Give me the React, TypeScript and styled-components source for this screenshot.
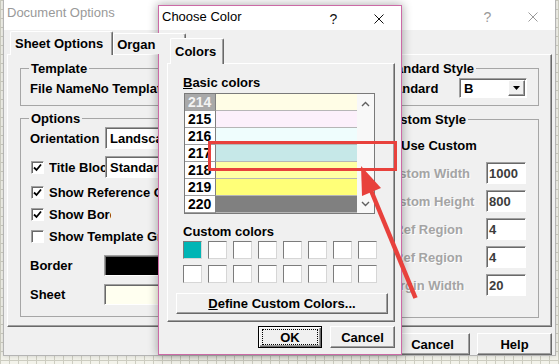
import React from 'react';
import styled, { createGlobalStyle, css } from 'styled-components';

type BasicColor = { num: number; color: string; selected?: boolean };

const BASIC_COLORS: BasicColor[] = [
  { num: 214, color: '#fffde6', selected: true },
  { num: 215, color: '#fcf0fb' },
  { num: 216, color: '#effdfd' },
  { num: 217, color: '#c6e8e8' },
  { num: 218, color: '#ffffa4' },
  { num: 219, color: '#ffff78' },
  { num: 220, color: '#808080' },
];

const CUSTOM_COLORS = ['#00b5b5', ...Array(15).fill('#ffffff')];

const CheckMark = () => (
  <svg width="9" height="9" viewBox="0 0 9 9">
    <path d="M1 4.5 L3.5 7 L8 1.5" fill="none" stroke="#000" strokeWidth="1.8" />
  </svg>
);

const CloseIcon = ({ color }: { color: string }) => (
  <svg width="10" height="10" viewBox="0 0 10 10">
    <path d="M0.5 0.5 L9.5 9.5 M9.5 0.5 L0.5 9.5" stroke={color} strokeWidth="1" />
  </svg>
);

const Chevron = ({ down }: { down?: boolean }) => (
  <svg width="9" height="6" viewBox="0 0 9 6">
    <path
      d={down ? 'M1 1 L4.5 4.5 L8 1' : 'M1 5 L4.5 1.5 L8 5'}
      fill="none"
      stroke="#606060"
      strokeWidth="1.4"
    />
  </svg>
);

const DropArrow = () => (
  <svg width="7" height="4" viewBox="0 0 7 4">
    <path d="M0 0 H7 L3.5 4 Z" fill="#000" />
  </svg>
);

const App = () => {
  return (
    <>
      <GlobalStyle />
      <Desktop>
        {/* back window: Document Options */}
        <Window $x={3} $y={-1} $w={553} $h={357} $frame="#b4b4b4">
          <TitleBar $h={30} $pt={3}>
            <TitleText $inactive>Document Options</TitleText>
            <TitleButtons>
              <TitleButton $inactive>?</TitleButton>
              <TitleButton $inactive>
                <CloseIcon color="#9a9a9a" />
              </TitleButton>
            </TitleButtons>
          </TitleBar>
          <DialogBody $pad="1px 3px 0 3px">
            <TabStrip $h={23}>
              <Tab $active $pad="0 9px 0 4px">Sheet Options</Tab>
              <Tab $pad="0 30px 0 3px">Organ</Tab>
            </TabStrip>
            <TabPanel $h={273} $pad="6px 12px 0 12px">
              <SheetColumn $w={330}>
                <Group>
                  <GroupTitle>Template</GroupTitle>
                  <GroupBody $pad="4px 0 9px 9px">
                    <FieldRow $h={16}>
                      <FieldLabel>File Name</FieldLabel>
                      <FieldLabel>No Template</FieldLabel>
                    </FieldRow>
                  </GroupBody>
                </Group>
                <Group $mt={5}>
                  <GroupTitle>Options</GroupTitle>
                  <GroupBody $pad="0 0 11px 9px">
                    <FieldRow $mt={1}>
                      <FieldLabel $w={75}>Orientation</FieldLabel>
                      <ComboBox $w={200} $h={22}>
                        Landscape
                        <DropButton>
                          <DropArrow />
                        </DropButton>
                      </ComboBox>
                    </FieldRow>
                    <FieldRow $mt={7}>
                      <CheckBox>
                        <CheckMark />
                      </CheckBox>
                      <FieldLabel $w={56}>Title Block</FieldLabel>
                      <ComboBox $w={200} $h={22}>
                        Standard
                        <DropButton>
                          <DropArrow />
                        </DropButton>
                      </ComboBox>
                    </FieldRow>
                    <FieldRow $mt={3}>
                      <CheckBox>
                        <CheckMark />
                      </CheckBox>
                      <FieldLabel>Show Reference Grid</FieldLabel>
                    </FieldRow>
                    <FieldRow>
                      <CheckBox>
                        <CheckMark />
                      </CheckBox>
                      <FieldLabel $w={62}>Show Border</FieldLabel>
                    </FieldRow>
                    <FieldRow>
                      <CheckBox />
                      <FieldLabel>Show Template Grid</FieldLabel>
                    </FieldRow>
                    <FieldRow $mt={7}>
                      <FieldLabel $w={74}>Border</FieldLabel>
                      <ColorWell $fill="#000000" />
                    </FieldRow>
                    <FieldRow $mt={7}>
                      <FieldLabel $w={74}>Sheet</FieldLabel>
                      <ColorWell $fill="#fffff0" />
                    </FieldRow>
                  </GroupBody>
                </Group>
              </SheetColumn>
              <SheetColumn $w={167} $right>
                <Group>
                  <GroupTitle>Standard Style</GroupTitle>
                  <GroupBody $pad="2px 0 7px 9px">
                    <FieldRow $h={20}>
                      <FieldLabel $w={77}>Standard</FieldLabel>
                      <ComboBox $w={68} $h={20}>
                        B
                        <DropButton>
                          <DropArrow />
                        </DropButton>
                      </ComboBox>
                    </FieldRow>
                  </GroupBody>
                </Group>
                <Group $mt={6}>
                  <GroupTitle>Custom Style</GroupTitle>
                  <GroupBody $pad="0 0 21px 9px">
                    <FieldRow $mt={7}>
                      <CheckBox>
                        <CheckMark />
                      </CheckBox>
                      <FieldLabel>Use Custom</FieldLabel>
                    </FieldRow>
                    {[
                      ['Custom Width', '1000'],
                      ['Custom Height', '800'],
                      ['X Ref Region', '4'],
                      ['Y Ref Region', '4'],
                      ['Margin Width', '20'],
                    ].map(([label, value]) => (
                      <FieldRow key={label} $mt={6}>
                        <FieldLabel $w={104} $disabled>
                          {label}
                        </FieldLabel>
                        <EditBox>{value}</EditBox>
                      </FieldRow>
                    ))}
                  </GroupBody>
                </Group>
              </SheetColumn>
            </TabPanel>
            <ButtonRow $gap={7} $mt={6}>
              <PushButton $w={75}>Cancel</PushButton>
              <PushButton $w={75}>Help</PushButton>
            </ButtonRow>
          </DialogBody>
        </Window>

        {/* front window: Choose Color */}
        <Window $x={158} $y={5} $w={244} $h={350} $frame="#cc6aa6" $raised>
          <TitleBar $h={24} $pt={1}>
            <TitleText>Choose Color</TitleText>
            <TitleButtons>
              <TitleButton>?</TitleButton>
              <TitleButton>
                <CloseIcon color="#111" />
              </TitleButton>
            </TitleButtons>
          </TitleBar>
          <DialogBody $pad="8px 6px 0 8px">
            <TabStrip $h={25}>
              <Tab $active $pad="0 7px 0 4px">
                Colors
              </Tab>
            </TabStrip>
            <TabPanel $h={259} $pad="11px 6px 0 8px" $column>
              <SectionLabel $ml={7}>
                <u>B</u>asic colors
              </SectionLabel>
              <ColorList>
                <ListRows>
                  {BASIC_COLORS.map((c) => (
                    <ListRow key={c.num}>
                      <NumCell $selected={c.selected}>{c.num}</NumCell>
                      <ColorCell $fill={c.color} />
                    </ListRow>
                  ))}
                </ListRows>
                <ScrollBar>
                  <Chevron />
                  <Chevron down />
                </ScrollBar>
              </ColorList>
              <SectionLabel $ml={7} $mt={10}>
                Custom colors
              </SectionLabel>
              <SwatchGrid>
                {CUSTOM_COLORS.map((c, i) => (
                  <Swatch key={i} $fill={c} />
                ))}
              </SwatchGrid>
              <PushButton $h={21} $mt={10}>
                <u>D</u>efine Custom Colors...
              </PushButton>
            </TabPanel>
            <ButtonRow $gap={8} $mt={4}>
              <DefaultButton $w={64}>
                <FocusRing>OK</FocusRing>
              </DefaultButton>
              <PushButton $w={65}>Cancel</PushButton>
            </ButtonRow>
          </DialogBody>
        </Window>

        {/* red annotation */}
        <Highlight />
        <ArrowLayer viewBox="0 0 559 364">
          <line x1="370" y1="188" x2="415.5" y2="298" stroke="#e8413c" strokeWidth="4.5" />
          <polygon points="361,166 381,188 362,196" fill="#e8413c" />
        </ArrowLayer>
      </Desktop>
    </>
  );
};

const GlobalStyle = createGlobalStyle`
  html, body {
    margin: 0;
    padding: 0;
  }
  body {
    width: 559px;
    height: 364px;
    overflow: hidden;
    font-family: "Liberation Sans", Arial, sans-serif;
    font-size: 13px;
    background-color: #f3f3eb;
    background-image:
      linear-gradient(to right, #cdcdc1 1px, transparent 1px),
      linear-gradient(to bottom, #cdcdc1 1px, transparent 1px);
    background-size: 9px 9px;
  }
  * {
    box-sizing: border-box;
  }
`;

const Desktop = styled.div`
  position: relative;
  width: 559px;
  height: 364px;
  overflow: hidden;
`;

const Window = styled.div<{ $x: number; $y: number; $w: number; $h: number; $frame: string; $raised?: boolean }>`
  position: absolute;
  left: ${(p) => p.$x}px;
  top: ${(p) => p.$y}px;
  width: ${(p) => p.$w}px;
  height: ${(p) => p.$h}px;
  display: flex;
  flex-direction: column;
  background: #f0f0f0;
  border: 1px solid ${(p) => p.$frame};
  box-shadow: ${(p) => (p.$raised ? '0 0 9px 1px rgba(0, 0, 0, 0.3)' : '0 0 5px rgba(0, 0, 0, 0.15)')};
`;

const TitleBar = styled.div<{ $h: number; $pt: number }>`
  flex: none;
  display: flex;
  align-items: flex-start;
  height: ${(p) => p.$h}px;
  padding: ${(p) => p.$pt}px 0 0 3px;
  background: #fff;
`;

const TitleText = styled.span<{ $inactive?: boolean }>`
  flex: 1;
  line-height: 16px;
  padding-top: 2px;
  color: ${(p) => (p.$inactive ? '#999' : '#000')};
`;

const TitleButtons = styled.div`
  display: flex;
  align-self: stretch;
`;

const TitleButton = styled.span<{ $inactive?: boolean }>`
  width: 45px;
  display: flex;
  align-items: center;
  justify-content: center;
  font-size: 14px;
  color: ${(p) => (p.$inactive ? '#9a9a9a' : '#111')};
`;

const DialogBody = styled.div<{ $pad: string }>`
  flex: 1;
  display: flex;
  flex-direction: column;
  padding: ${(p) => p.$pad};
`;

const TabStrip = styled.div<{ $h: number }>`
  flex: none;
  position: relative;
  z-index: 2;
  display: flex;
  align-items: flex-start;
  height: ${(p) => p.$h}px;
  padding-left: 3px;
`;

const Tab = styled.div<{ $active?: boolean; $pad: string }>`
  display: flex;
  align-items: center;
  padding: ${(p) => p.$pad};
  font-weight: bold;
  white-space: nowrap;
  background: #f0f0f0;
  border-top: 1px solid #fff;
  border-left: 1px solid #fff;
  border-right: 1px solid #696969;
  border-radius: 2px 2px 0 0;
  box-shadow: inset -1px 0 0 #a0a0a0;
  ${(p) =>
    p.$active
      ? css`
          height: calc(100% + 1px);
        `
      : css`
          height: calc(100% - 2px);
          margin-top: 2px;
        `}
`;

const TabPanel = styled.div<{ $h: number; $pad: string; $column?: boolean }>`
  flex: none;
  display: flex;
  flex-direction: ${(p) => (p.$column ? 'column' : 'row')};
  align-items: flex-start;
  height: ${(p) => p.$h}px;
  padding: ${(p) => p.$pad};
  border: 1px solid;
  border-color: #fff #696969 #696969 #fff;
  box-shadow: inset -1px -1px 0 #a0a0a0;
`;

const SheetColumn = styled.div<{ $w: number; $right?: boolean }>`
  width: ${(p) => p.$w}px;
  flex: none;
  display: flex;
  flex-direction: column;
  ${(p) => p.$right && 'margin-left: auto;'}
`;

const Group = styled.fieldset<{ $mt?: number }>`
  margin: ${(p) => p.$mt ?? 0}px 0 0 0;
  padding: 0;
  min-width: 0;
  border: 1px solid #a6a6a6;
`;

const GroupTitle = styled.legend`
  margin-left: 8px;
  padding: 0 2px;
  line-height: 15px;
  font-weight: bold;
`;

const GroupBody = styled.div<{ $pad: string }>`
  display: flex;
  flex-direction: column;
  padding: ${(p) => p.$pad};
`;

const FieldRow = styled.div<{ $mt?: number; $h?: number }>`
  display: flex;
  align-items: center;
  height: ${(p) => p.$h ?? 22}px;
  margin-top: ${(p) => p.$mt ?? 0}px;
`;

const FieldLabel = styled.span<{ $w?: number; $disabled?: boolean }>`
  flex: none;
  width: ${(p) => (p.$w ? `${p.$w}px` : 'auto')};
  overflow: hidden;
  white-space: nowrap;
  font-weight: bold;
  color: ${(p) => (p.$disabled ? '#a4a4a4' : '#000')};
  ${(p) => p.$disabled && 'text-shadow: 1px 1px 0 #fff;'}
`;

const sunken = css`
  border: 1px solid;
  border-color: #a0a0a0 #fff #fff #a0a0a0;
  box-shadow: inset 1px 1px 0 #696969;
`;

const ComboBox = styled.div<{ $w: number; $h: number }>`
  flex: none;
  display: flex;
  align-items: center;
  width: ${(p) => p.$w}px;
  height: ${(p) => p.$h}px;
  padding: 1px 1px 1px 4px;
  background: #fff;
  font-weight: bold;
  ${sunken}
`;

const DropButton = styled.span`
  margin-left: auto;
  width: 17px;
  height: 100%;
  display: flex;
  align-items: center;
  justify-content: center;
  background: #f0f0f0;
  border: 1px solid;
  border-color: #fff #696969 #696969 #fff;
  box-shadow: inset -1px -1px 0 #a0a0a0;
`;

const CheckBox = styled.span`
  flex: none;
  width: 13px;
  height: 13px;
  margin: 0 5px 0 1px;
  display: flex;
  align-items: center;
  justify-content: center;
  background: #fff;
  ${sunken}
`;

const ColorWell = styled.div<{ $fill: string }>`
  flex: none;
  width: 130px;
  height: 21px;
  background: ${(p) => p.$fill};
  ${sunken}
`;

const EditBox = styled.div`
  flex: none;
  width: 40px;
  height: 22px;
  display: flex;
  align-items: center;
  padding-left: 2px;
  background: #fff;
  font-weight: bold;
  color: #3c3c3c;
  ${sunken}
`;

const ButtonRow = styled.div<{ $gap: number; $mt: number }>`
  display: flex;
  justify-content: flex-end;
  gap: ${(p) => p.$gap}px;
  margin-top: ${(p) => p.$mt}px;
`;

const PushButton = styled.div<{ $w?: number; $h?: number; $mt?: number }>`
  flex: none;
  width: ${(p) => (p.$w ? `${p.$w}px` : '100%')};
  height: ${(p) => p.$h ?? 22}px;
  margin-top: ${(p) => p.$mt ?? 0}px;
  display: flex;
  align-items: center;
  justify-content: center;
  background: #f0f0f0;
  border: 1px solid;
  border-color: #fff #696969 #696969 #fff;
  box-shadow: inset -1px -1px 0 #a0a0a0;
  font-weight: bold;
  color: #000;
  white-space: nowrap;
`;

const DefaultButton = styled(PushButton)`
  align-items: stretch;
  padding: 2px 3px;
  border: 1px solid #000;
  box-shadow: inset 1px 1px 0 #fff, inset -1px -1px 0 #696969, inset -2px -2px 0 #a0a0a0;
`;

const FocusRing = styled.span`
  flex: 1;
  display: flex;
  align-items: center;
  justify-content: center;
  border: 1px dotted #000;
`;

const SectionLabel = styled.div<{ $ml: number; $mt?: number }>`
  margin: ${(p) => p.$mt ?? 0}px 0 0 ${(p) => p.$ml}px;
  line-height: 15px;
  font-weight: bold;
`;

const ColorList = styled.div`
  flex: none;
  display: flex;
  width: 191px;
  height: 121px;
  margin: 3px 0 0 8px;
  background: #fff;
  border: 1px solid #7a7a7a;
`;

const ListRows = styled.div`
  flex: 1;
  display: flex;
  flex-direction: column;
`;

const ListRow = styled.div`
  display: flex;
  height: 17px;
`;

const NumCell = styled.div<{ $selected?: boolean }>`
  flex: none;
  width: 31px;
  padding-left: 3px;
  font-size: 14px;
  font-weight: bold;
  line-height: 16px;
  background: ${(p) => (p.$selected ? '#a9a9a9' : '#fff')};
  color: ${(p) => (p.$selected ? '#f3f3f3' : '#000')};
  border-right: 1px solid #808080;
  border-bottom: 1px solid #a0a0a0;
`;

const ColorCell = styled.div<{ $fill: string }>`
  flex: 1;
  background: ${(p) => p.$fill};
  border-bottom: 1px solid #b6b6b6;
`;

const ScrollBar = styled.div`
  flex: none;
  width: 17px;
  display: flex;
  flex-direction: column;
  align-items: center;
  justify-content: space-between;
  padding: 7px 0 6px;
  background: #f8f8f8;
`;

const SwatchGrid = styled.div`
  display: grid;
  grid-template-columns: repeat(8, 19px);
  grid-auto-rows: 18px;
  gap: 6px;
  margin: 2px 0 0 7px;
`;

const Swatch = styled.div<{ $fill: string }>`
  background: ${(p) => p.$fill};
  border: 1px solid;
  border-color: #7c7c7c #d6d6d6 #d6d6d6 #7c7c7c;
`;

const Highlight = styled.div`
  position: absolute;
  left: 208px;
  top: 141px;
  width: 189px;
  height: 30px;
  border: 3px solid #e8413c;
  pointer-events: none;
`;

const ArrowLayer = styled.svg`
  position: absolute;
  left: 0;
  top: 0;
  width: 559px;
  height: 364px;
  pointer-events: none;
`;

export default App;
